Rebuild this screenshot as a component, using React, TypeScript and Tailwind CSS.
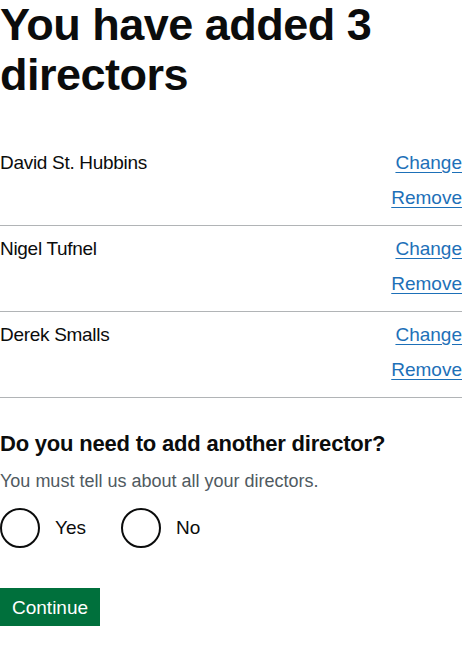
import React from 'react';

const directors = ['David St. Hubbins', 'Nigel Tufnel', 'Derek Smalls'];

export default function App() {
  return (
    <div className="w-[462px] bg-white text-[#0b0c0c]" style={{ fontFamily: '"Liberation Sans", Arial, sans-serif' }}>
      <h1 className="text-[45px] font-bold leading-[50px] tracking-[-0.5px] m-0">You have added 3 directors</h1>

      <dl className="mt-[40px]">
        {directors.map((name) => (
          <div key={name} className="flex justify-between border-b border-[#b1b4b6] pt-[10px] pb-[15px]">
            <dt className="text-[19px] leading-[25px] tracking-[-0.3px]">{name}</dt>
            <dd className="flex flex-col items-end gap-[10px] text-[19px] leading-[25px]">
              <a href="#" className="text-[#1d70b8] underline underline-offset-[3px]">Change</a>
              <a href="#" className="text-[#1d70b8] underline underline-offset-[3px]">Remove</a>
            </dd>
          </div>
        ))}
      </dl>

      <fieldset className="mt-[31px]">
        <legend className="text-[22px] font-bold leading-[30px] tracking-[-0.2px]">Do you need to add another director?</legend>
        <div className="mt-[10px] text-[18px] leading-[25px] text-[#505a5f]">You must tell us about all your directors.</div>
        <div className="mt-[14px] flex gap-[35px]">
          {['Yes', 'No'].map((label) => (
            <label key={label} className="flex items-center gap-[15px] text-[19px]">
              <span className="w-[40px] h-[40px] rounded-full border-2 border-[#0b0c0c] bg-white" />
              <span>{label}</span>
            </label>
          ))}
        </div>
      </fieldset>

      <button className="mt-[40px] bg-[#00703c] text-white text-[19px] leading-[19px] px-[12px] pt-[10px] pb-[9px] shadow-[0_2px_0_#002d18]">
        Continue
      </button>
    </div>
  );
}
